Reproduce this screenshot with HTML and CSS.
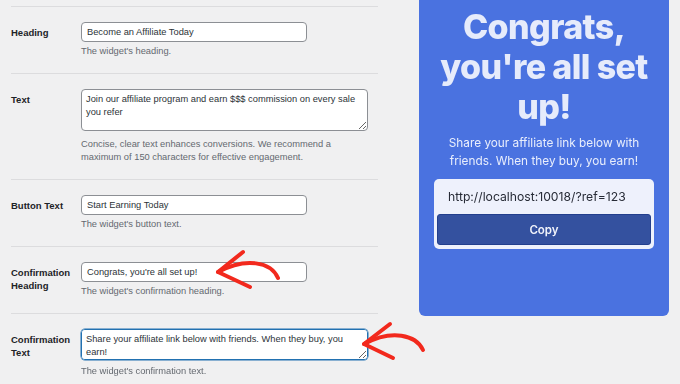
FILE: index.html
```html
<!DOCTYPE html>
<html lang="en">
<head>
<meta charset="UTF-8">
<meta name="viewport" content="width=device-width, initial-scale=1.0">
<title>Affiliate Widget Settings</title>
<link rel="stylesheet" href="styles.css">
</head>
<body>
  <div class="page">
    <div class="settings">
      <div class="row">
        <label class="label" for="heading">Heading</label>
        <div class="field">
          <input class="input" type="text" id="heading" value="Become an Affiliate Today">
          <p class="desc">The widget's heading.</p>
        </div>
      </div>

      <div class="row">
        <label class="label" for="text">Text</label>
        <div class="field">
          <textarea class="textarea" id="text">Join our affiliate program and earn $$$ commission on every sale
you refer</textarea>
          <p class="desc desc-area">Concise, clear text enhances conversions. We recommend a<br>maximum of 150 characters for effective engagement.</p>
        </div>
      </div>

      <div class="row">
        <label class="label" for="button-text">Button Text</label>
        <div class="field">
          <input class="input" type="text" id="button-text" value="Start Earning Today">
          <p class="desc">The widget's button text.</p>
        </div>
      </div>

      <div class="row">
        <label class="label" for="confirm-heading">Confirmation Heading</label>
        <div class="field">
          <input class="input" type="text" id="confirm-heading" value="Congrats, you're all set up!">
          <p class="desc">The widget's confirmation heading.</p>
        </div>
      </div>

      <div class="row">
        <label class="label" for="confirm-text">Confirmation Text</label>
        <div class="field">
          <textarea class="textarea textarea-short is-focused" id="confirm-text">Share your affiliate link below with friends. When they buy, you
earn!</textarea>
          <p class="desc desc-focus">The widget's confirmation text.</p>
        </div>
      </div>
    </div>

    <div class="preview">
      <h1 class="preview-title">Congrats, you're all set up!</h1>
      <p class="preview-text">Share your affiliate link below with<br>friends. When they buy, you earn!</p>
      <div class="link-box">
        <div class="link-url">http://localhost:10018/?ref=123</div>
        <button class="copy-button">Copy</button>
      </div>
    </div>
  </div>

  <!-- annotation arrows drawn over the screenshot -->
  <svg class="arrows" width="680" height="384" viewBox="0 0 680 384">
    <g fill="none" stroke="#f2291d" stroke-width="4" stroke-linecap="round" stroke-linejoin="round">
      <path d="M278 278 C271 262 246 257 218 272"/>
      <path d="M243 252 L218 272 L250 287"/>
      <path d="M423 350 C416 335 392 329 364 344"/>
      <path d="M390 324 L364 344 L393 358"/>
    </g>
  </svg>
</body>
</html>
```

FILE: styles.css
```css
* {
  box-sizing: border-box;
  margin: 0;
  padding: 0;
}

body {
  font-family: "Liberation Sans", Arial, sans-serif;
  background-color: #f0f0f1;
  width: 680px;
  height: 384px;
  overflow: hidden;
  position: relative;
}

.page {
  display: flex;
  align-items: flex-start;
  gap: 41px;
  padding: 0 11px;
}

.settings {
  width: 367px;
  padding-top: 6px;
}

.row {
  display: flex;
  border-top: 1px solid #dcdcde;
  padding: 15px 0;
}

.label {
  width: 70px;
  flex-shrink: 0;
  padding-top: 5px;
  padding-right: 8px;
  font-size: 9.5px;
  line-height: 12.5px;
  font-weight: 600;
  color: #1d2327;
}

.field {
  display: flex;
  flex-direction: column;
  align-items: flex-start;
}

.input,
.textarea {
  font-family: inherit;
  font-size: 9.3px;
  color: #2c3338;
  background-color: #fff;
  border: 1px solid #8c8f94;
  border-radius: 4px;
  outline: none;
}

.input {
  width: 226px;
  height: 20px;
  padding: 0 5px;
}

.textarea {
  display: block;
  width: 287px;
  height: 42px;
  padding: 3px 4px;
  line-height: 13px;
  resize: vertical;
}

.textarea-short {
  height: 31px;
}

.textarea.is-focused {
  border-color: #2271b1;
  box-shadow: 0 0 0 0.5px #2271b1;
}

.desc {
  margin-top: 3px;
  font-size: 9.3px;
  line-height: 13px;
  color: #646970;
}

.desc-area {
  margin-top: 7px;
}

.desc-focus {
  margin-top: 5px;
}

.preview {
  width: 250px;
  margin-top: -10px;
  padding: 17px 15px 67px;
  background-color: #4a72e0;
  border-radius: 6px;
  text-align: center;
  font-family: Inter, "Liberation Sans", sans-serif;
}

.preview-title {
  font-size: 34px;
  line-height: 40px;
  font-weight: 800;
  letter-spacing: -0.6px;
  color: #e6ebfb;
}

.preview-text {
  margin-top: 7px;
  font-size: 11.8px;
  line-height: 18px;
  color: #e9eefc;
}

.link-box {
  margin-top: 9px;
  padding: 0 3px 4px;
  background-color: #eef1fc;
  border-radius: 5px;
}

.link-url {
  padding: 0 11px;
  height: 35px;
  line-height: 35px;
  text-align: left;
  white-space: nowrap;
  font-size: 12.2px;
  color: #272b36;
}

.copy-button {
  display: block;
  width: 100%;
  height: 31px;
  font-family: inherit;
  font-size: 11.5px;
  font-weight: 600;
  color: #f2f4fb;
  background-color: #34519f;
  border: 1px solid #233f8d;
  border-radius: 3px;
}

.arrows {
  position: absolute;
  top: 0;
  left: 0;
  pointer-events: none;
}
```
